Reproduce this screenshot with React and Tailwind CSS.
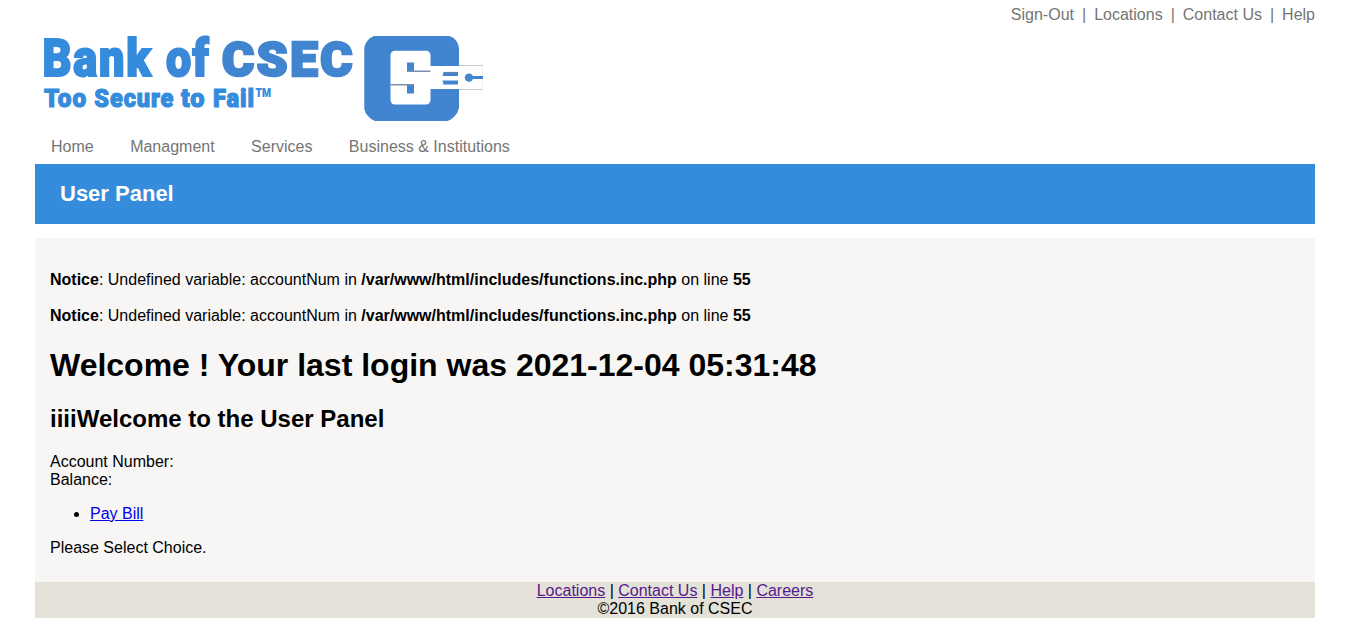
const logoFont = 'Roboto, "Liberation Sans", sans-serif';

function Word({ x, y, width, size, fill, children, stroke = 2, spacing = 0 }) {
  return (
    <text
      x={x}
      y={y}
      fontSize={size}
      fontWeight="900"
      fontFamily={logoFont}
      letterSpacing={spacing}
      textLength={width}
      lengthAdjust="spacingAndGlyphs"
      fill={fill}
      stroke={fill}
      strokeWidth={stroke}
    >
      {children}
    </text>
  );
}

function Logo() {
  return (
    <svg width="450" height="100" viewBox="35 28 450 100" className="block overflow-visible" role="img">
      <Word x="42.5" y="76" width="110" size="51.5" fill="#358bdc" spacing={2}>Bank</Word>
      <Word x="166" y="76" width="44" size="51.5" fill="#3b88d8" spacing={1.5}>of</Word>
      <Word x="222" y="76" width="133" size="48" fill="#4184d0" spacing={2.5} stroke={2.6}>CSEC</Word>
      <Word x="44" y="107" width="43" size="25.7" fill="#358bdc" spacing={1} stroke={1.1}>Too</Word>
      <Word x="94.3" y="107" width="80" size="25.7" fill="#358bdc" spacing={1} stroke={1.1}>Secure</Word>
      <Word x="181" y="107" width="24.5" size="25.7" fill="#358bdc" spacing={1} stroke={1.1}>to</Word>
      <Word x="213" y="107" width="42" size="25.7" fill="#358bdc" spacing={1} stroke={1.1}>Fail</Word>
      <Word x="255.5" y="96.5" width="15.5" size="12" fill="#358bdc" stroke={0.2}>TM</Word>
      <path
        d="M374 36H449Q454 37 457 42Q459 45 459 49V108Q458 113 454 117Q451 120 447 121H375Q371 120 368 116Q365 113 364.3 109V48Q365 43 369 39Q371 37 374 36Z"
        fill="#4184d0"
      />
      <rect x="390.5" y="50.7" width="40" height="53.8" rx="4.5" fill="#fff" />
      <rect x="428" y="66" width="55" height="23" fill="#fff" />
      <path d="M459 65.5H483M459 89.5H483" stroke="#c4ccd8" />
      <path d="M482.5 66V89" stroke="#f1f3f6" />
      <path d="M407 62.5H414V71.5H407ZM407 84.5H414V93.5H407Z" fill="#4184d0" />
      <path d="M407 71.3H430.5M390.5 84.7H414" stroke="#7890ad" strokeWidth="1.6" />
      <path d="M443.5 72H458V76H442.5ZM442.5 80.5H458V84.5H443.5Z" fill="#4184d0" />
      <path d="M443.5 72.4H458" stroke="#6f88a8" strokeWidth="0.8" />
      <circle cx="469" cy="77.6" r="4.2" fill="#4184d0" />
      <path d="M469 77.5H483" stroke="#4184d0" strokeWidth="3" />
    </svg>
  );
}

function Notice() {
  return (
    <p className="mb-[18px]">
      <b>Notice</b>: Undefined variable: accountNum in <b>/var/www/html/includes/functions.inc.php</b> on line <b>55</b>
    </p>
  );
}

export default function App() {
  return (
    <div className="min-h-[633px] bg-white pl-[35px] pr-[31px] font-['Liberation_Sans',Arial,sans-serif] text-[16px] leading-[18px] text-black">
      <header>
        <nav className="flex h-7 justify-end pt-[6px] text-[#757575]">
          <a>Sign-Out</a>
          <span className="px-2">|</span>
          <a>Locations</a>
          <span className="px-2">|</span>
          <a>Contact Us</a>
          <span className="px-2">|</span>
          <a>Help</a>
        </nav>
        <Logo />
        <nav className="flex h-9 gap-[36.45px] pl-4 pt-[10px] text-[#757575]">
          <a>Home</a>
          <a>Managment</a>
          <a>Services</a>
          <a>Business &amp; Institutions</a>
        </nav>
      </header>
      <div className="flex h-[60px] items-center bg-[#358bdc] pl-[25px] text-[22px] font-bold text-white">
        User Panel
      </div>
      <main className="mt-[14px] h-[344px] bg-[#f7f6f4] px-[15px] pt-[33px]">
        <Notice />
        <Notice />
        <h1 className="mt-[22px] text-[32px] leading-9 font-bold">Welcome ! Your last login was 2021-12-04 05:31:48</h1>
        <h2 className="mt-[22px] text-[24px] leading-7 font-bold">iiiiWelcome to the User Panel</h2>
        <p className="mt-5">
          Account Number:
          <br />
          Balance:
        </p>
        <ul className="mt-4 list-disc pl-10">
          <li>
            <a className="text-[#0000ee] underline">Pay Bill</a>
          </li>
        </ul>
        <p className="mt-4">Please Select Choice.</p>
      </main>
      <footer className="h-9 bg-[#e4e1d9] text-center">
        <div className="[&>a]:text-[#551a8b] [&>a]:underline">
          <a>Locations</a> | <a>Contact Us</a> | <a>Help</a> | <a>Careers</a>
        </div>
        <div>©2016 Bank of CSEC</div>
      </footer>
    </div>
  );
}
